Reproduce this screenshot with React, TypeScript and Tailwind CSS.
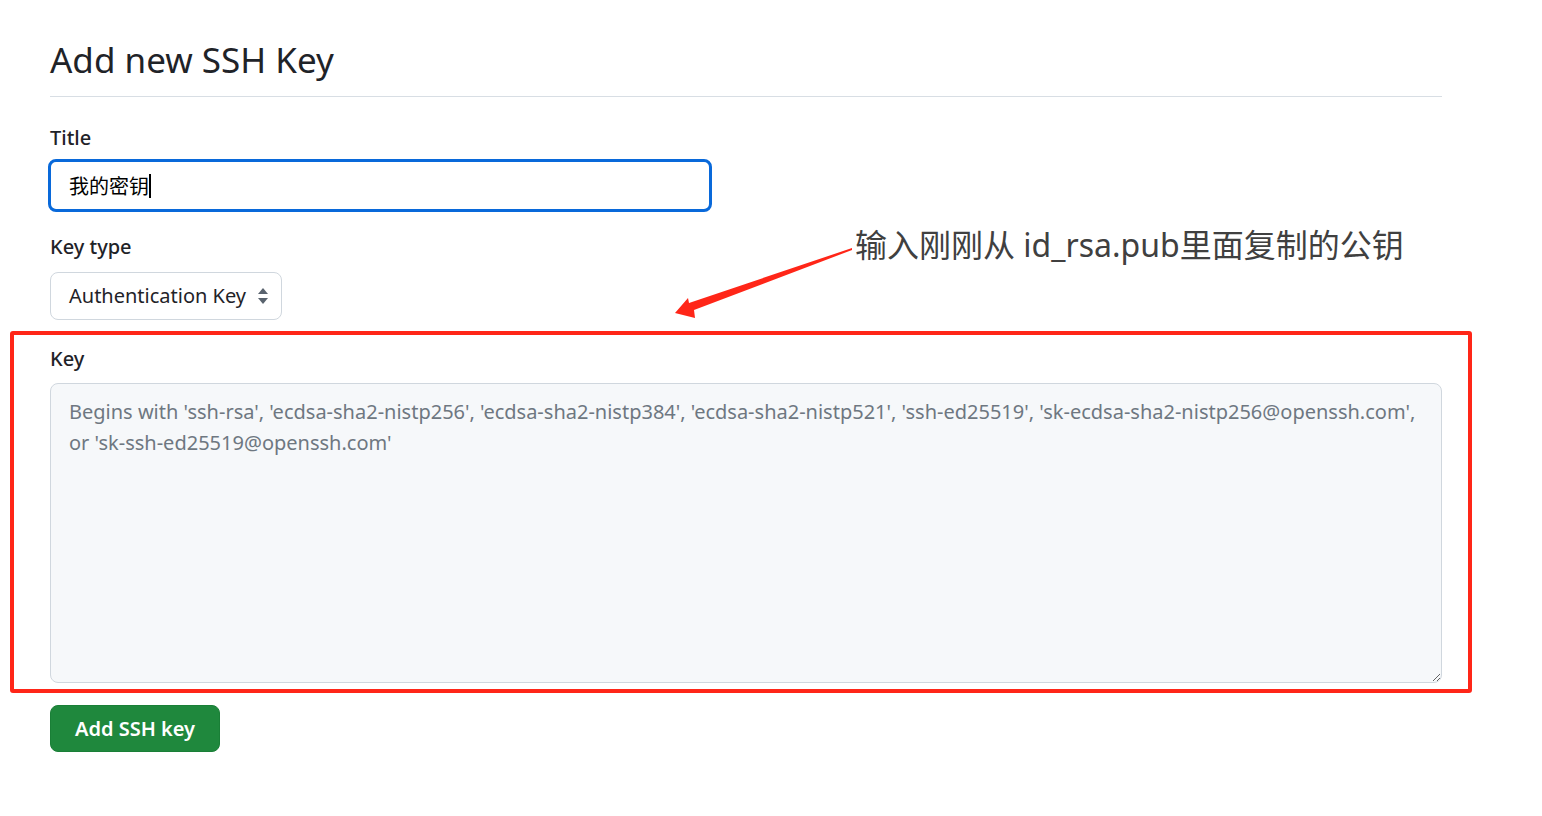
import React from 'react';

const font = { fontFamily: '"Noto Sans", "Noto Sans CJK SC", sans-serif' };

const SelectArrows: React.FC = () => (
  <svg width="12" height="18" viewBox="0 0 12 18" className="shrink-0">
    <path d="M6 1 L11 7 L1 7 Z" fill="#59636e" />
    <path d="M6 17 L11 11 L1 11 Z" fill="#59636e" />
  </svg>
);

const App: React.FC = () => {
  return (
    <div className="relative min-h-[816px] w-[1542px] bg-white text-[#1f2328]" style={font}>
      <div className="w-[1392px] ml-[50px] pt-[36px]">
        <h2 className="text-[35px] leading-[48px] font-normal pb-[12px] border-b border-[#d8dee4]">
          Add new SSH Key
        </h2>

        <div className="mt-[26px]">
          <label className="block text-[20px] leading-[30px] font-medium">Title</label>
          <div className="mt-[6px] w-[664px] h-[53px] -ml-[2px] rounded-[8px] border-[3px] border-[#0969da] flex items-center pl-[18px]">
            <span className="text-[20px] text-black" style={{ fontFamily: '"Noto Sans CJK SC", sans-serif' }}>我的密钥</span>
            <span className="w-[2px] h-[24px] bg-black" />
          </div>
        </div>

        <div className="mt-[20px]">
          <label className="block text-[20px] leading-[30px] font-medium">Key type</label>
          <div className="mt-[10px] w-[232px] h-[48px] rounded-[8px] border border-[#d0d7de] flex items-center justify-between pl-[18px] pr-[12px]">
            <span className="text-[20px]">Authentication Key</span>
            <SelectArrows />
          </div>
        </div>

        <div className="mt-[11px] ml-[-40px] mr-[-30px] border-[4px] border-[#ff2618] rounded-[3px] pl-[36px] pr-[26px] pt-[9px] pb-[6px]">
          <label className="block text-[20px] leading-[30px] font-medium">Key</label>
          <textarea
            className="mt-[9px] block w-full h-[300px] rounded-[8px] border border-[#d0d7de] bg-[#f6f8fa] px-[18px] py-[12px] text-[20px] leading-[31px] placeholder:text-[#6e7781] outline-none"
            style={font}
            placeholder={"Begins with 'ssh-rsa', 'ecdsa-sha2-nistp256', 'ecdsa-sha2-nistp384', 'ecdsa-sha2-nistp521', 'ssh-ed25519', 'sk-ecdsa-sha2-nistp256@openssh.com',\nor 'sk-ssh-ed25519@openssh.com'"}
          />
        </div>

        <button className="mt-[12px] h-[47px] px-[24px] rounded-[8px] bg-[#1f883d] border border-[#1a7f37] text-white text-[20px] font-semibold">
          Add SSH key
        </button>
      </div>

      {/* annotation */}
      <div className="absolute left-[855px] top-[222px] text-[32px] leading-[46px] text-[#404040]" style={font}>
        输入刚刚从 id_rsa.pub里面复制的公钥
      </div>
      <svg className="absolute left-0 top-0 pointer-events-none" width="1542" height="816">
        <polygon
          points="675,313 688,298 689,303 852,248 852,250 694,310 695,318"
          fill="#ff2618"
        />
      </svg>
    </div>
  );
};

export default App;
